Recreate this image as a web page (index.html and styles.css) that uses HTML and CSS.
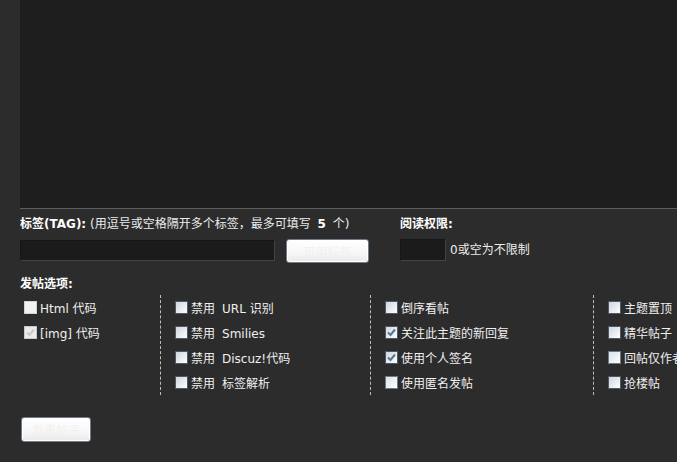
FILE: index.html
```html
<!DOCTYPE html>
<html lang="zh-CN">
<head>
<meta charset="utf-8">
<title>发帖</title>
<link rel="stylesheet" href="styles.css">
</head>
<body>
<div class="page">
  <div class="editor"></div>

  <div class="meta">
    <div class="tag-group">
      <div class="label"><b>标签(TAG):</b> (用逗号或空格隔开多个标签，最多可填写 <b class="num">5</b> 个)</div>
      <div class="field-row">
        <span class="text-input tag-input"></span>
        <button class="btn tag-btn" type="button">可用标签</button>
      </div>
    </div>
    <div class="perm-group">
      <div class="label"><b>阅读权限:</b></div>
      <div class="field-row">
        <span class="text-input perm-input"></span>
        <span class="hint">0或空为不限制</span>
      </div>
    </div>
  </div>

  <div class="label options-title"><b>发帖选项:</b></div>

  <div class="options">
    <div class="col col1">
      <div class="opt"><span class="cb plain"></span><span>Html 代码</span></div>
      <div class="opt"><span class="cb disabled"><svg viewBox="0 0 13 13" width="13" height="13"><path d="M3 6.5 L5.5 9 L10 3.5" fill="none" stroke="#c3c9cf" stroke-width="2"/></svg></span><span>[img] 代码</span></div>
    </div>
    <div class="col col2">
      <div class="opt"><span class="cb"></span><span>禁用<span class="sp"></span>URL 识别</span></div>
      <div class="opt"><span class="cb"></span><span>禁用<span class="sp"></span>Smilies</span></div>
      <div class="opt"><span class="cb"></span><span>禁用<span class="sp"></span>Discuz!代码</span></div>
      <div class="opt"><span class="cb"></span><span>禁用<span class="sp"></span>标签解析</span></div>
    </div>
    <div class="col col3">
      <div class="opt"><span class="cb"></span><span>倒序看帖</span></div>
      <div class="opt"><span class="cb"><svg viewBox="0 0 13 13" width="13" height="13"><path d="M3 6.5 L5.5 9 L10 3.5" fill="none" stroke="#5b7590" stroke-width="2"/></svg></span><span>关注此主题的新回复</span></div>
      <div class="opt"><span class="cb"><svg viewBox="0 0 13 13" width="13" height="13"><path d="M3 6.5 L5.5 9 L10 3.5" fill="none" stroke="#5b7590" stroke-width="2"/></svg></span><span>使用个人签名</span></div>
      <div class="opt"><span class="cb light"></span><span>使用匿名发帖</span></div>
    </div>
    <div class="col col4">
      <div class="opt"><span class="cb"></span><span>主题置顶</span></div>
      <div class="opt"><span class="cb"></span><span>精华帖子</span></div>
      <div class="opt"><span class="cb light"></span><span>回帖仅作者可见</span></div>
      <div class="opt"><span class="cb"></span><span>抢楼帖</span></div>
    </div>
  </div>

  <button class="btn submit-btn" type="button">发表帖子</button>
</div>
</body>
</html>
```

FILE: styles.css
```css
html, body {
  margin: 0;
  padding: 0;
  overflow: hidden;
  background: #2c2c2c;
}

body {
  width: 677px;
  height: 462px;
  font-family: "DejaVu Sans", "Noto Sans CJK SC", sans-serif;
  font-size: 12px;
  color: #ececec;
}

.page {
  padding-left: 20px;
}

.editor {
  height: 208px;
  background: #1e1e1e;
  border-bottom: 1px solid #5c5c5c;
}

.label {
  line-height: 18px;
  height: 18px;
  white-space: nowrap;
}

.label b {
  font-weight: bold;
  color: #ffffff;
}

.label .num {
  margin: 0 3px;
}

.meta {
  display: grid;
  grid-template-columns: 380px auto;
  margin-top: 6px;
}

.field-row {
  display: flex;
  align-items: flex-start;
  margin-top: 5px;
}

.text-input {
  display: block;
  box-sizing: border-box;
  background: #1b1b1b;
  border: 1px solid;
  border-color: #161616 #434343 #434343 #161616;
}

.tag-input {
  width: 255px;
  height: 21px;
  margin-top: 2px;
}

.perm-input {
  width: 46px;
  height: 22px;
  margin-top: 1px;
}

.hint {
  margin-left: 4px;
  line-height: 22px;
  margin-top: 1px;
  white-space: nowrap;
}

.btn {
  box-sizing: border-box;
  font-family: "DejaVu Sans", "Noto Sans CJK SC", sans-serif;
  font-size: 12px;
  color: #f1f1f1;
  background: linear-gradient(#ffffff, #f7f7f7 60%, #e9e9e9);
  border: 1px solid #6f7b8b;
  border-radius: 3px;
  box-shadow: inset 0 0 0 1px #ffffff;
  padding: 0;
  margin: 0;
}

.tag-btn {
  width: 83px;
  height: 24px;
  margin-left: 11px;
  margin-top: 1px;
}

.options-title {
  margin-top: 12px;
}

.options {
  display: flex;
  flex-wrap: nowrap;
  margin-top: 2px;
  height: 100px;
}

.col {
  flex-shrink: 0;
  box-sizing: border-box;
  padding-left: 14px;
  border-left: 1px dashed #bdbdbd;
  height: 100px;
}

.col1 {
  width: 140px;
  padding-left: 4px;
  border-left: none;
}

.col2 {
  width: 210px;
}

.col3 {
  width: 223px;
}

.col4 {
  width: 200px;
}

.opt {
  display: flex;
  align-items: center;
  height: 25px;
  white-space: nowrap;
  color: #f0f0f0;
}

.sp {
  display: inline-block;
  width: 7px;
}

.cb {
  display: block;
  box-sizing: border-box;
  width: 13px;
  height: 13px;
  margin-right: 3px;
  margin-top: -1px;
  border: 1px solid #4b5968;
  background: linear-gradient(135deg, #cfd6de, #f0f2f4 70%, #ffffff);
  flex-shrink: 0;
}

.cb svg {
  display: block;
  margin: -1px;
}

.cb.plain {
  border-color: #d2d2d2;
  background: #f2f2f2;
}

.cb.disabled {
  border-color: #c7c7c7;
  background: #ececec;
}

.cb.light {
  border-color: #6d7a88;
  background: linear-gradient(135deg, #dde3e9, #f3f5f7 70%, #ffffff);
}

.submit-btn {
  display: block;
  width: 70px;
  height: 25px;
  margin-top: 22px;
  margin-left: 1px;
}
```
